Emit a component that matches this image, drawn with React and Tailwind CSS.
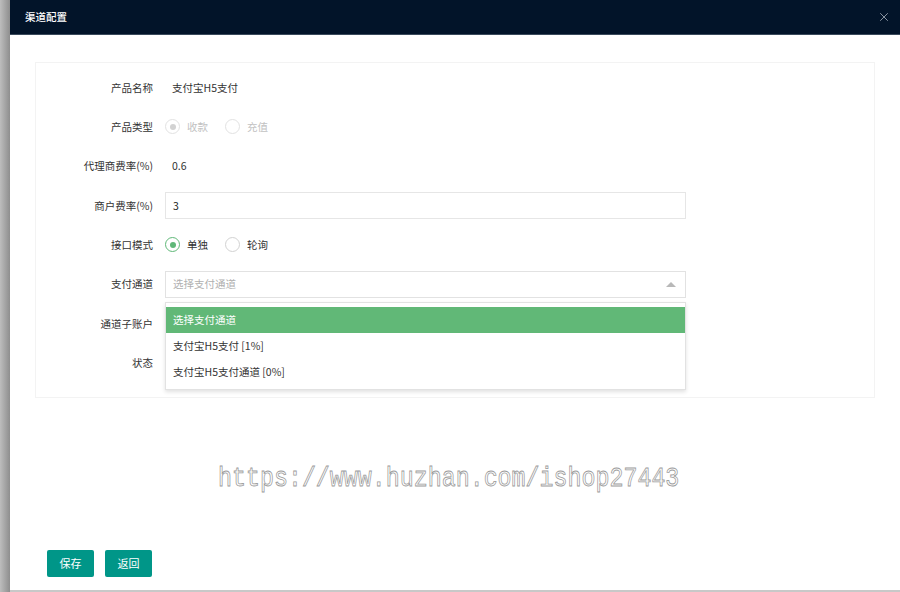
import { X } from 'lucide-react';

const font = { fontFamily: '"Noto Sans CJK SC", "Noto Sans", sans-serif' };

// Radio button with label
function Radio({ checked, disabled, label }) {
  const ring = disabled ? 'border-[#e2e2e2]' : checked ? 'border-[#5fb878]' : 'border-[#d2d2d2]';
  const dot = disabled ? 'bg-[#d2d2d2]' : 'bg-[#5fb878]';
  return (
    <div className="flex items-center mr-[17px]">
      <span className={`w-[15px] h-[15px] rounded-full border ${ring} flex items-center justify-center`}>
        {checked && <span className={`w-[6px] h-[6px] rounded-full ${dot}`} />}
      </span>
      <span className={`ml-[7px] ${disabled ? 'text-[#c2c2c2]' : 'text-[#333]'}`}>{label}</span>
    </div>
  );
}

function Row({ label, children }) {
  return (
    <div className="flex items-center h-[39.3px]">
      <div className="w-[117px] text-right text-[#333] shrink-0">{label}</div>
      <div className="ml-[12px] flex items-center flex-1">{children}</div>
    </div>
  );
}

export default function App() {
  const options = ['选择支付通道', '支付宝H5支付 [1%]', '支付宝H5支付通道 [0%]'];

  return (
    <div className="w-[900px] h-[592px] flex bg-[#a0a0a0] overflow-hidden text-[10.5px]" style={font}>
      {/* overlay strip */}
      <div className="w-[10px] shrink-0 bg-gradient-to-r from-[#bdbdbd] to-[#8e8e8e]" />

      <div className="flex-1 flex flex-col bg-white border-b-2 border-[#c8c8c8]">
        {/* header */}
        <div className="h-[35px] shrink-0 bg-[#021429] flex items-center justify-between pl-[15px] pr-[9px] border-b border-[#3a4a5c]">
          <span className="text-white text-[10.5px] font-medium">渠道配置</span>
          <X size={14} strokeWidth={1.3} className="text-[#b4bcc6]" />
        </div>

        {/* body */}
        <div className="relative flex-1 flex flex-col px-[25px] pt-[27px] pb-[13px]">
          <div className="h-[336px] border border-[#f3f3f3] pt-[5px] shrink-0">
            <Row label="产品名称">
              <span className="text-[#333] pl-[7px]">支付宝H5支付</span>
            </Row>
            <Row label="产品类型">
              <Radio checked disabled label="收款" />
              <Radio disabled label="充值" />
            </Row>
            <Row label="代理商费率(%)">
              <span className="text-[#333] pl-[7px]">0.6</span>
            </Row>
            <Row label="商户费率(%)">
              <div className="w-[521px] h-[27px] border border-[#e6e6e6] flex items-center px-[7px] text-[#222]">3</div>
            </Row>
            <Row label="接口模式">
              <Radio checked label="单独" />
              <Radio label="轮询" />
            </Row>
            <Row label="支付通道">
              <div className="relative w-[521px]">
                <div className="h-[27px] border border-[#e2e2e2] flex items-center justify-between px-[7px] text-[#b0b0b0]">
                  <span>选择支付通道</span>
                  <span className="w-0 h-0 border-l-[5px] border-r-[5px] border-b-[5px] border-l-transparent border-r-transparent border-b-[#b8b8b8] mr-[2px]" />
                </div>
                <div className="absolute left-0 right-0 top-[31px] z-10 bg-white border border-[#e2e2e2] shadow-[0_2px_4px_rgba(0,0,0,0.12)] py-[4px]">
                  {options.map((o, i) => (
                    <div
                      key={o}
                      className={`h-[26px] flex items-center px-[7px] ${i === 0 ? 'bg-[#61b877] text-white' : 'text-[#333]'}`}
                    >
                      {o}
                    </div>
                  ))}
                </div>
              </div>
            </Row>
            <Row label="通道子账户" />
            <Row label="状态" />
          </div>

          <div className="flex-1" />

          {/* actions */}
          <div className="flex gap-[11px] pl-[12px]">
            <button className="w-[47px] h-[27px] rounded-[2px] bg-[#009688] text-white text-[11px]">保存</button>
            <button className="w-[47px] h-[27px] rounded-[2px] bg-[#009688] text-white text-[11px]">返回</button>
          </div>

          {/* watermark */}
          <div
            className="absolute left-[208px] top-[431px] text-[23.3px] leading-none text-white pointer-events-none origin-top scale-y-[1.15]"
            style={{ fontFamily: '"Liberation Mono", monospace', WebkitTextStroke: '0.7px #9a9a9a' }}
          >
            https://www.huzhan.com/ishop27443
          </div>
        </div>
      </div>
    </div>
  );
}
